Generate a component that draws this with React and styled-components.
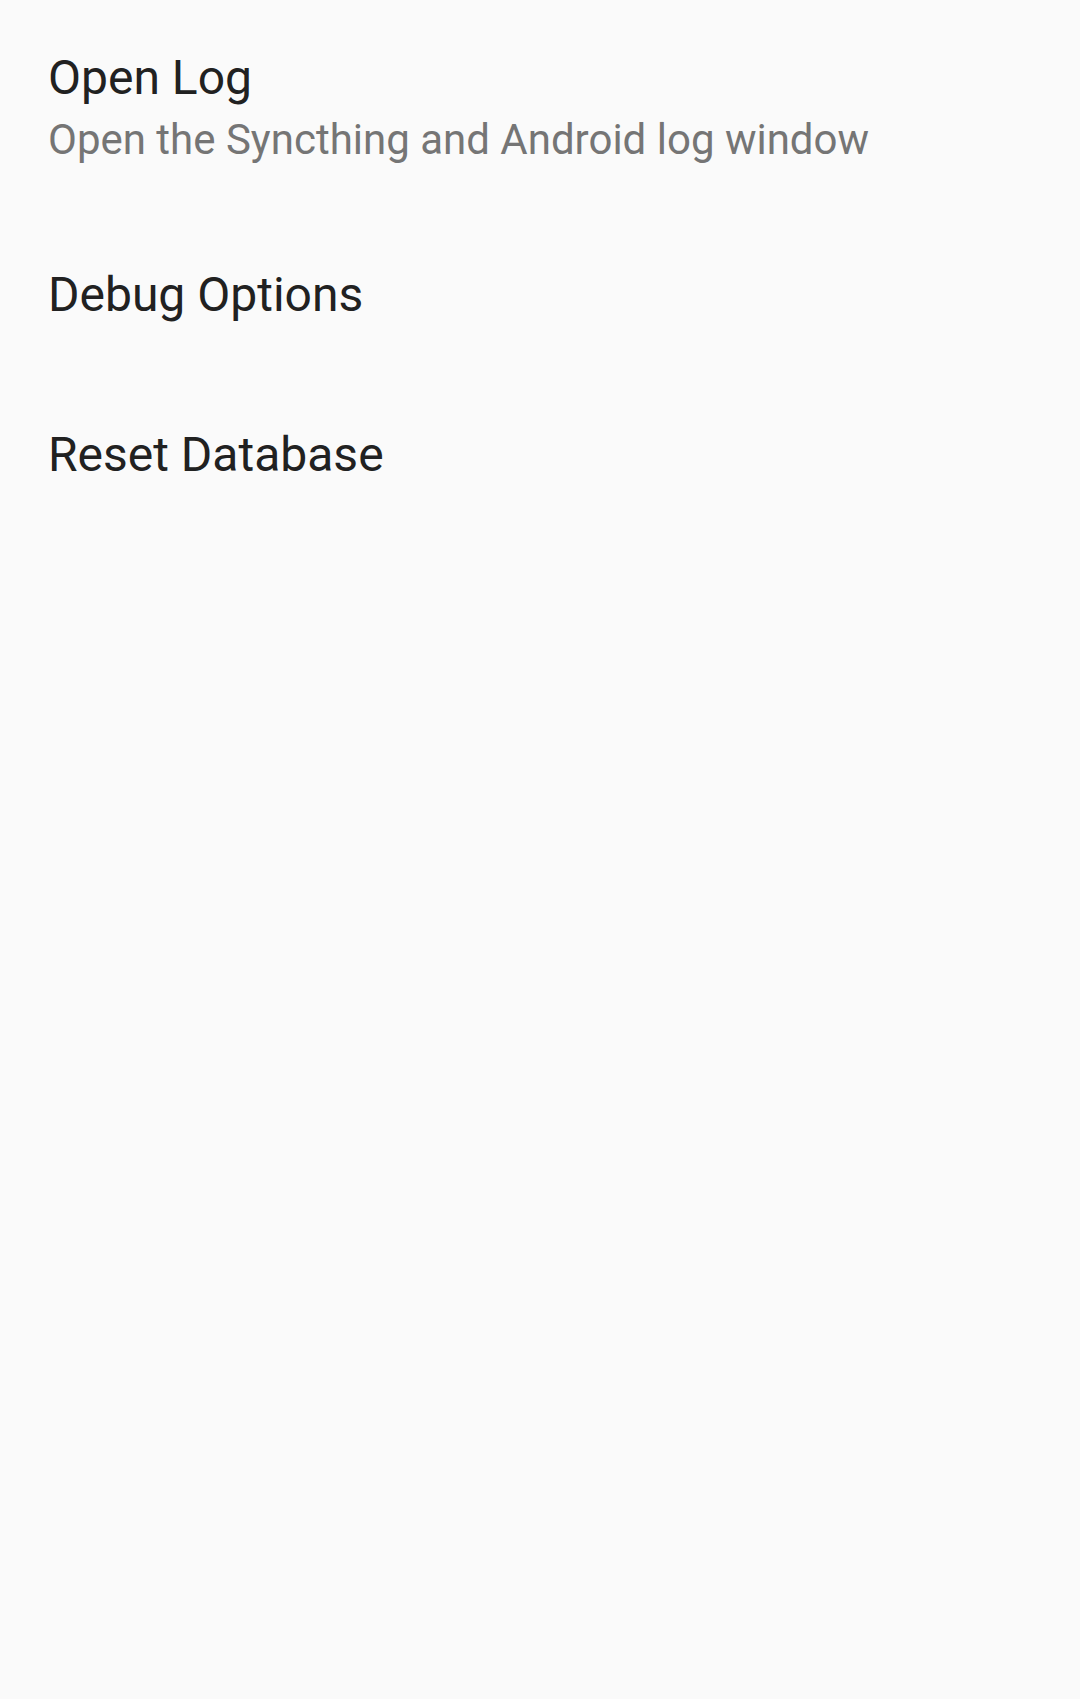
import React from "react";
import styled, { createGlobalStyle } from "styled-components";

const GlobalStyle = createGlobalStyle`
  * { box-sizing: border-box; }
  body {
    margin: 0;
    background: #fafafa;
    font-family: Roboto, "Noto Sans", sans-serif;
  }
`;

const Screen = styled.main`
  min-height: 100vh;
  background: #fafafa;
`;

const PreferenceList = styled.ul`
  display: flex;
  flex-direction: column;
  margin: 0;
  padding: 0;
  list-style: none;
`;

const Preference = styled.button`
  display: flex;
  flex-direction: column;
  align-items: flex-start;
  gap: 3px;
  width: 100%;
  padding: 46px 48px 50px;
  border: 0;
  background: transparent;
  font-family: inherit;
  text-align: left;
  cursor: pointer;
`;

const Title = styled.span`
  color: #212121;
  font-size: 48px;
  line-height: 64px;
`;

const Summary = styled.span`
  color: #757575;
  font-size: 42px;
  line-height: 54px;
`;

const preferences = [
  { title: "Open Log", summary: "Open the Syncthing and Android log window" },
  { title: "Debug Options" },
  { title: "Reset Database" },
];

export default function App() {
  return (
    <Screen>
      <GlobalStyle />
      <PreferenceList>
        {preferences.map(({ title, summary }) => (
          <li key={title}>
            <Preference type="button">
              <Title>{title}</Title>
              {summary && <Summary>{summary}</Summary>}
            </Preference>
          </li>
        ))}
      </PreferenceList>
    </Screen>
  );
}
